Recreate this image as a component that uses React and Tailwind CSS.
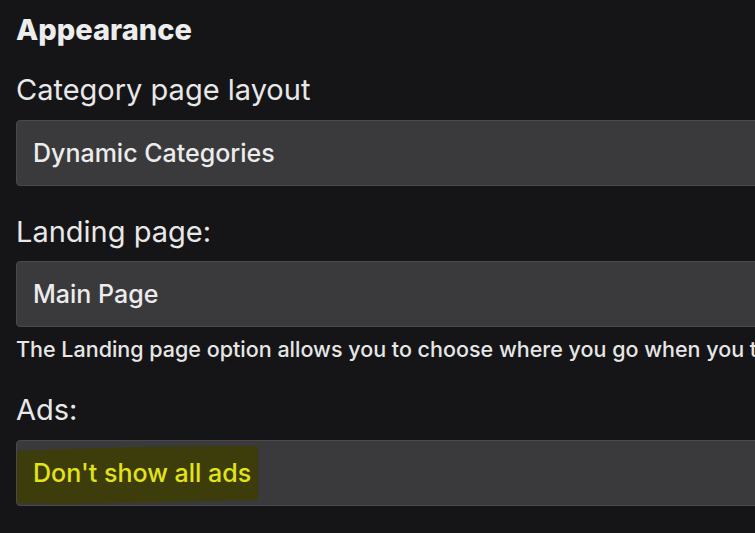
import React from 'react';

const font = { fontFamily: 'Inter, "Noto Sans", sans-serif' };

const Field = ({ value, highlight }) => (
  <div className="relative h-[66px] w-[800px] rounded-[4px] border border-[#4a4a4c] bg-[#3a3a3c] flex items-center pl-[16px]">
    {highlight && (
      <svg
        className="absolute left-0 top-0"
        width="242"
        height="66"
        viewBox="0 0 242 66"
      >
        <path
          d="M0 10 C40 8 80 7 120 6 C170 5 210 5 241 5 L241 59 C200 60 150 61 100 62 C60 63 30 63 0 62 Z"
          fill="#3d3d0c"
        />
      </svg>
    )}
    <span
      className={
        'relative text-[25px] leading-[30px] font-medium ' +
        (highlight ? 'text-[#e3e31a]' : 'text-[#ececec]')
      }
    >
      {value}
    </span>
  </div>
);

const App = () => {
  return (
    <div
      className="w-[755px] h-[533px] overflow-hidden bg-[#151517] pl-[16px] pt-[13px]"
      style={font}
    >
      <h2 className="text-[29px] leading-[34px] font-extrabold text-[#ededed]">Appearance</h2>

      <div className="mt-[26px] text-[29px] leading-[34px] text-[#e8e8e8]">Category page layout</div>
      <div className="mt-[13px]">
        <Field value="Dynamic Categories" />
      </div>

      <div className="mt-[29px] text-[29px] leading-[34px] text-[#e8e8e8]">Landing page:</div>
      <div className="mt-[12px]">
        <Field value="Main Page" />
      </div>
      <p className="mt-[9px] w-[739px] overflow-hidden text-[21.5px] leading-[26px] font-medium text-[#e6e6e6] whitespace-nowrap">
        The Landing page option allows you to choose where you go when you t
      </p>

      <div className="mt-[31px] text-[29px] leading-[34px] text-[#e8e8e8]">Ads:</div>
      <div className="mt-[13px]">
        <Field value="Don't show all ads" highlight />
      </div>
    </div>
  );
};

export default App;
